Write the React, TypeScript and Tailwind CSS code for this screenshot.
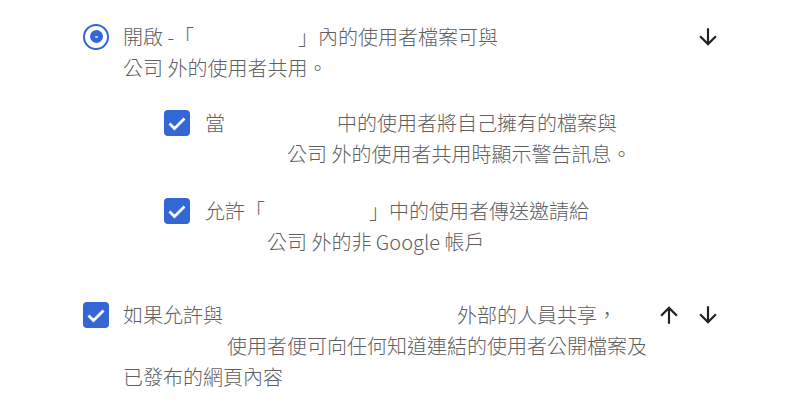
import React from "react";

const ArrowDown = () => (
  <svg width="26" height="26" viewBox="0 0 24 24" className="block">
    <path fill="#202124" d="M20 12l-1.41-1.41L13 16.17V4h-2v12.17l-5.58-5.59L4 12l8 8 8-8z" />
  </svg>
);
const ArrowUp = () => (
  <svg width="26" height="26" viewBox="0 0 24 24" className="block">
    <path fill="#202124" d="M4 12l1.41 1.41L11 7.83V20h2V7.83l5.58 5.59L20 12l-8-8-8 8z" />
  </svg>
);

const Check = () => (
  <div className="w-[26px] h-[26px] rounded-[4px] bg-[#3367d6] flex items-center justify-center">
    <svg width="26" height="26" viewBox="0 0 26 26" className="block">
      <path d="M5.5 13.5L10.5 18.5L20.5 8.5" fill="none" stroke="#fff" strokeWidth="2.8" />
    </svg>
  </div>
);

const Gap = ({ w }: { w: string }) => <span className={`inline-block ${w}`} />;

export default function App() {
  return (
    <div className="w-[798px] h-[414px] bg-white overflow-hidden pt-[21px] text-[20px] leading-[31px] font-light text-[#606060] font-['Noto_Sans_CJK_TC',sans-serif]">
      {/* Row 1 radio */}
      <div className="flex pl-[83px] pr-[77px]">
        <div className="w-[40px] shrink-0 pt-[2.5px]">
          <div className="w-[26px] h-[26px] rounded-full border-[2.5px] border-[#3367d6] flex items-center justify-center">
            <div className="w-[13px] h-[13px] rounded-full bg-[#3367d6] flex items-center justify-center">
              <div className="w-[3px] h-[2px] bg-white/70 rounded-full" />
            </div>
          </div>
        </div>
        <div className="flex-1 whitespace-pre">
          <div>開啟 -「<Gap w="w-[104px]" />」內的使用者檔案可與</div>
          <div>公司 外的使用者共用。</div>
        </div>
        <div className="pt-[2.5px]">
          <ArrowDown />
        </div>
      </div>

      {/* Sub checkbox 1 */}
      <div className="flex pl-[164px] mt-[24px]">
        <div className="w-[41px] shrink-0 pt-[2.5px]">
          <Check />
        </div>
        <div className="whitespace-pre">
          <div>當<Gap w="w-[112px]" />中的使用者將自己擁有的檔案與</div>
          <div><Gap w="w-[82px]" />公司 外的使用者共用時顯示警告訊息。</div>
        </div>
      </div>

      {/* Sub checkbox 2 */}
      <div className="flex pl-[164px] mt-[26px]">
        <div className="w-[41px] shrink-0 pt-[2.5px]">
          <Check />
        </div>
        <div className="whitespace-pre">
          <div>允許「<Gap w="w-[104px]" />」中的使用者傳送邀請給</div>
          <div><Gap w="w-[62px]" />公司 外的非 Google 帳戶</div>
        </div>
      </div>

      {/* Row 3 */}
      <div className="flex pl-[83px] pr-[77px] mt-[42px]">
        <div className="w-[40px] shrink-0 pt-[2.5px]">
          <Check />
        </div>
        <div className="flex-1 whitespace-pre">
          <div>如果允許與<Gap w="w-[234px]" />外部的人員共享，</div>
          <div><Gap w="w-[104px]" />使用者便可向任何知道連結的使用者公開檔案及</div>
          <div>已發布的網頁內容</div>
        </div>
        <div className="flex gap-[13px] pt-[2.5px]">
          <ArrowUp />
          <ArrowDown />
        </div>
      </div>
    </div>
  );
}
